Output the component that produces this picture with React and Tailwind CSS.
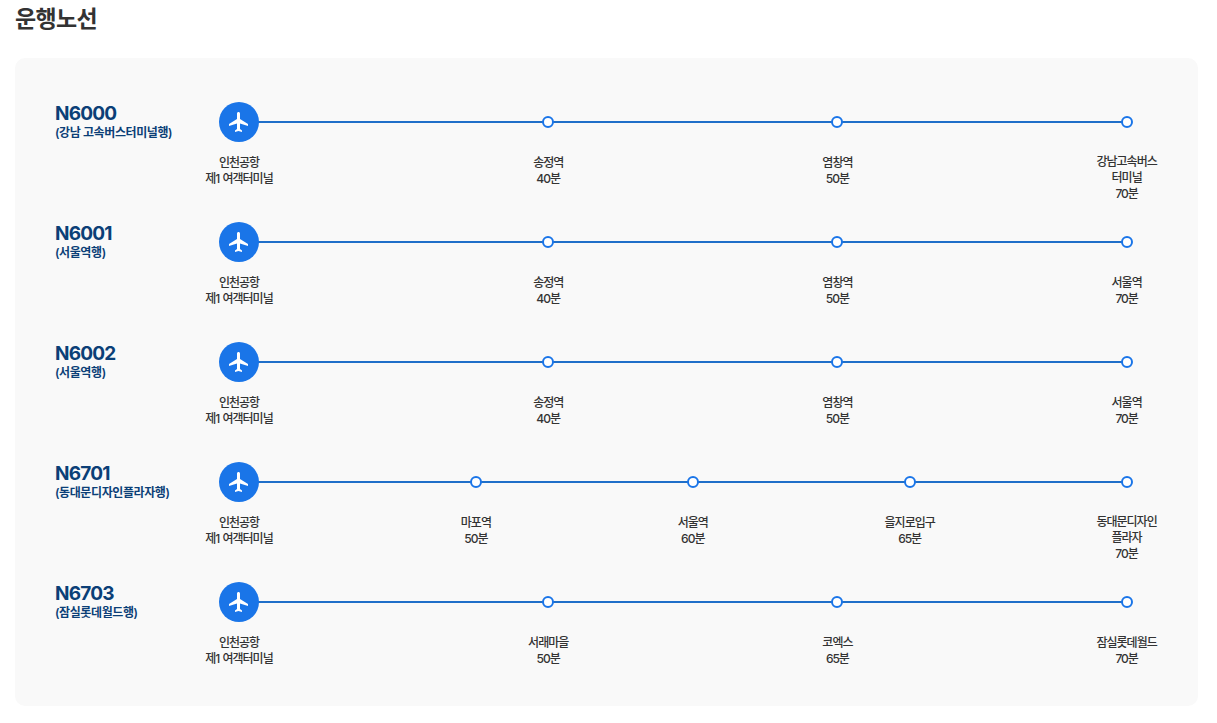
const routes = [
  {
    code: "N6000",
    dest: "(강남 고속버스터미널행)",
    stops: [
      { name: ["송정역"], time: "40분" },
      { name: ["염창역"], time: "50분" },
      { name: ["강남고속버스", "터미널"], time: "70분" },
    ],
  },
  {
    code: "N6001",
    dest: "(서울역행)",
    stops: [
      { name: ["송정역"], time: "40분" },
      { name: ["염창역"], time: "50분" },
      { name: ["서울역"], time: "70분" },
    ],
  },
  {
    code: "N6002",
    dest: "(서울역행)",
    stops: [
      { name: ["송정역"], time: "40분" },
      { name: ["염창역"], time: "50분" },
      { name: ["서울역"], time: "70분" },
    ],
  },
  {
    code: "N6701",
    dest: "(동대문디자인플라자행)",
    stops: [
      { name: ["마포역"], time: "50분" },
      { name: ["서울역"], time: "60분" },
      { name: ["을지로입구"], time: "65분" },
      { name: ["동대문디자인", "플라자"], time: "70분" },
    ],
  },
  {
    code: "N6703",
    dest: "(잠실롯데월드행)",
    stops: [
      { name: ["서래마을"], time: "50분" },
      { name: ["코엑스"], time: "65분" },
      { name: ["잠실롯데월드"], time: "70분" },
    ],
  },
];

const PlaneIcon = () => (
  <svg className="w-6 h-6 text-white" viewBox="0 0 24 24" fill="currentColor">
    <path d="M21 16v-2l-8-5V3.5c0-.83-.67-1.5-1.5-1.5S10 2.67 10 3.5V9l-8 5v2l8-2.5V19l-2 1.5V22l3.5-1 3.5 1v-1.5L13 19v-5.5l8 2.5z" />
  </svg>
);

const Label = ({ lines }) => (
  <div className="mt-[13px] text-center text-xs leading-4 font-medium tracking-[-1px] [word-spacing:1px] text-[#333333] whitespace-nowrap">
    {lines.map((line, index) => (
      <p key={index}>{line}</p>
    ))}
  </div>
);

const App = () => {
  return (
    <div
      className="bg-white pl-[15px] pr-[19px] h-[723px] overflow-hidden"
      style={{ fontFamily: "Inter, 'Noto Sans CJK KR', sans-serif" }}
    >
      <h2 className="h-[38px] mb-5 text-[23px] leading-[38px] font-bold tracking-[-0.7px] text-[#333333]">
        운행노선
      </h2>

      <div className="flex flex-col gap-5 rounded-[10px] bg-[#f9f9f9] pl-10 pr-[41.4px] pt-11 pb-[24px]">
        {routes.map((route) => (
          <div key={route.code} className="flex h-[100px]">
            <div className="w-[134px] shrink-0">
              <p className="text-[19px] leading-6 font-bold tracking-[-0.8px] text-[#0b3f77]">
                {route.code}
              </p>
              <p className="text-xs leading-[14px] font-semibold tracking-[-0.4px] text-[#0b3f77]">
                {route.dest}
              </p>
            </div>

            <div className="relative flex flex-1 justify-between">
              {/* line sits behind the stops */}
              <div className="absolute left-[50px] right-[30px] top-[19px] h-0.5 bg-[#1f6fc9]" />

              <div className="relative flex w-[100px] flex-col items-center">
                <div className="flex h-10 w-10 items-center justify-center rounded-full bg-[#1a75e8]">
                  <PlaneIcon />
                </div>
                <Label lines={["인천공항", "제1 여객터미널"]} />
              </div>

              {route.stops.map((stop) => (
                <div key={stop.time} className="relative flex w-[60px] flex-col items-center">
                  <div className="flex h-10 items-center">
                    <span className="h-3 w-3 rounded-full border-2 border-[#1a75e8] bg-white" />
                  </div>
                  <Label lines={[...stop.name, stop.time]} />
                </div>
              ))}
            </div>
          </div>
        ))}
      </div>
    </div>
  );
};

export default App;
